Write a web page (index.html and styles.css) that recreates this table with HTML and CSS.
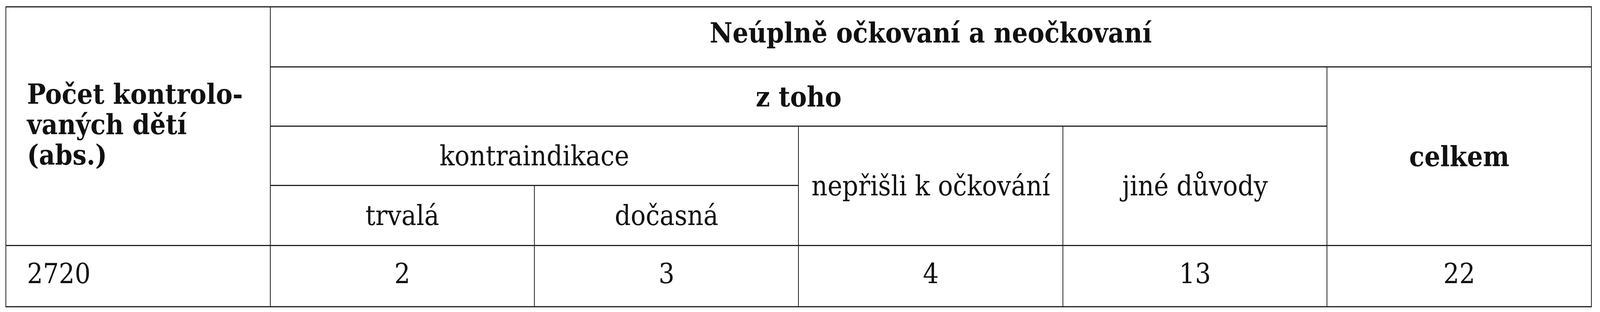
FILE: index.html
```html
<!DOCTYPE html>
<html lang="cs">
<head>
<meta charset="utf-8">
<title>Neúplně očkovaní a neočkovaní</title>
<link rel="stylesheet" href="styles.css">
</head>
<body>
<div class="page">
  <table class="stats">
    <colgroup>
      <col class="c"><col class="c"><col class="c"><col class="c"><col class="c"><col class="c">
    </colgroup>
    <tbody>
      <tr class="r1">
        <th class="lead" rowspan="4">Počet kontrolo-<br>vaných dětí<br>(abs.)</th>
        <th class="bold top" colspan="5">Neúplně očkovaní a neočkovaní</th>
      </tr>
      <tr class="r2">
        <th class="bold" colspan="4">z toho</th>
        <th class="bold" rowspan="3">celkem</th>
      </tr>
      <tr class="r3">
        <th colspan="2">kontraindikace</th>
        <th rowspan="2">nepřišli k očkování</th>
        <th rowspan="2">jiné důvody</th>
      </tr>
      <tr class="r4">
        <th>trvalá</th>
        <th>dočasná</th>
      </tr>
      <tr class="r5">
        <td class="lead">2720</td>
        <td>2</td>
        <td>3</td>
        <td>4</td>
        <td>13</td>
        <td>22</td>
      </tr>
    </tbody>
  </table>
</div>
</body>
</html>
```

FILE: styles.css
```css
html, body {
  margin: 0;
  padding: 0;
  background: #ffffff;
}

.page {
  padding-top: 16px;
  padding-left: 0.345vw;
}

.stats {
  border-collapse: collapse;
  table-layout: fixed;
  width: 99.14vw;
  font-family: "DejaVu Serif", "Liberation Serif", serif;
  font-size: 72px;
  color: #111111;
}

.c {
  width: 16.666%;
}

.stats th,
.stats td {
  border-top: 3px solid #222222;
  border-bottom: 3px solid #222222;
  border-left: 2px solid #222222;
  border-right: 2px solid #222222;
  padding: 0;
  text-align: center;
  vertical-align: middle;
  font-weight: normal;
  white-space: nowrap;
}

.stats .bold {
  font-weight: bold;
}

.stats .lead {
  text-align: left;
  padding-left: 1.3vw;
}

.stats th.lead {
  font-weight: bold;
  line-height: 78px;
  padding-bottom: 10px;
}

.stats .top {
  padding-bottom: 22px;
}

.r1 { height: 154px; }
.r2 { height: 152px; }
.r3 { height: 152px; }
.r4 { height: 154px; }
.r5 { height: 157px; }

.r5 td {
  padding-bottom: 14px;
}

/* Narrower windows: keep the same proportions with a condensed cut */
@media (max-width: 4400px) {
  .stats {
    font-family: "DejaVu Serif Condensed", "DejaVu Serif", "Liberation Serif", serif;
    font-stretch: semi-condensed;
    font-size: 71px;
  }
}
```
